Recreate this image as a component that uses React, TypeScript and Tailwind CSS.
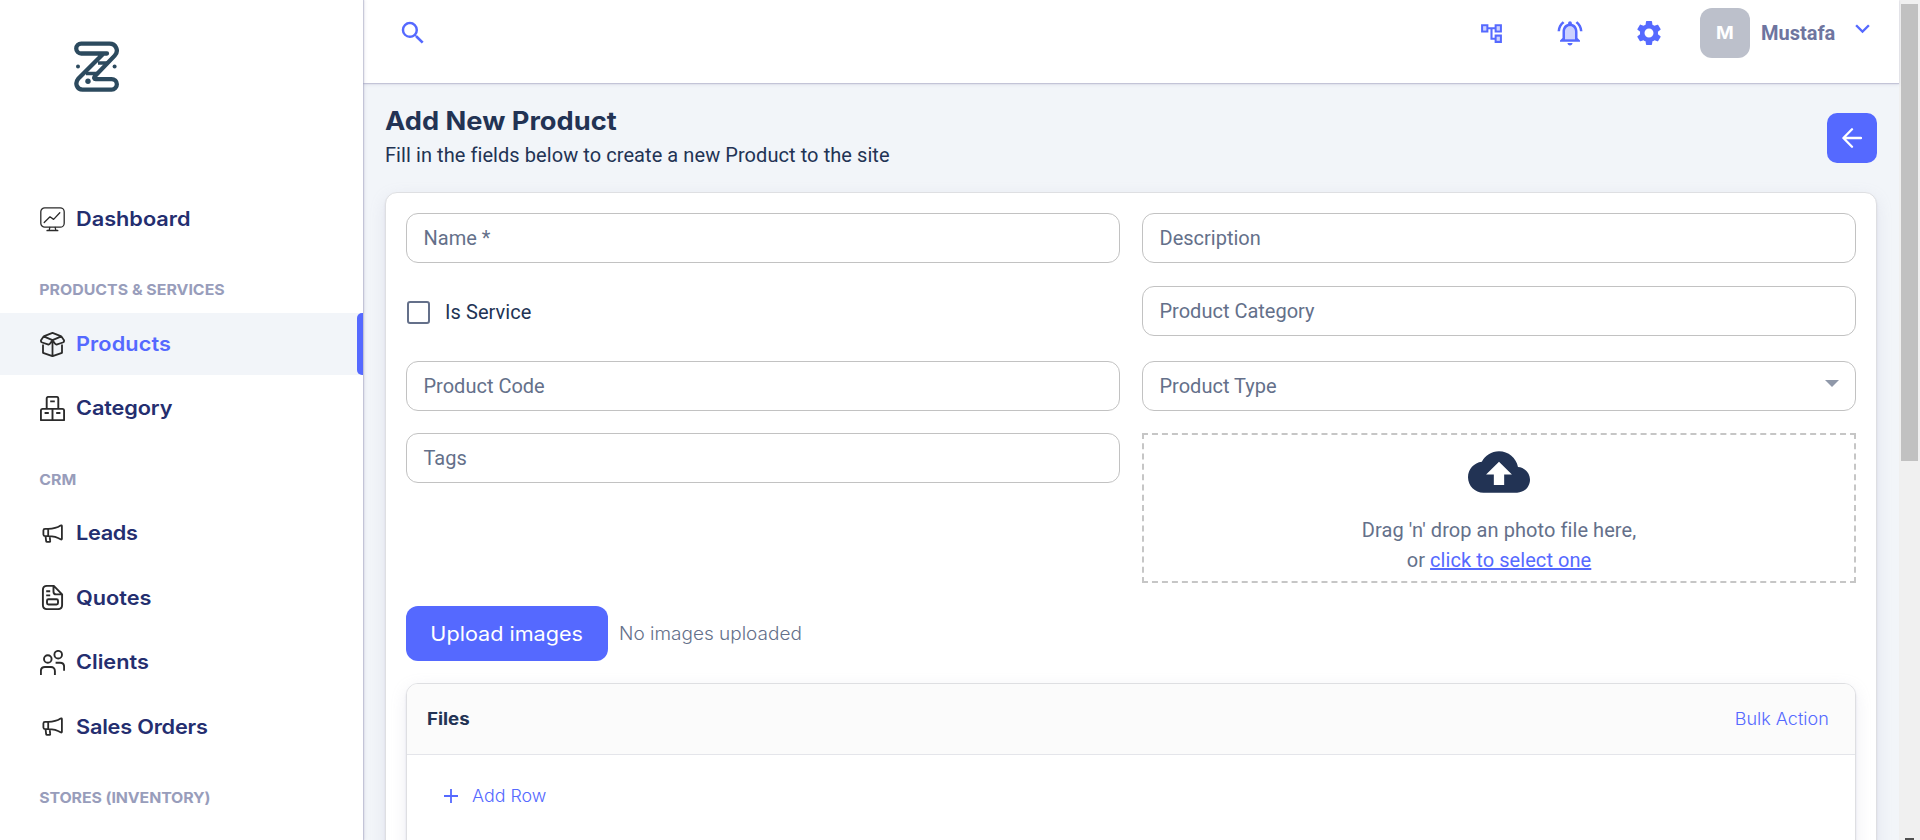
import type { ReactNode } from "react";

const ink = { fill: "none", stroke: "#2b2b2b", strokeWidth: 1.9, strokeLinejoin: "round" as const };

function MenuIcon({ children }: { children: ReactNode }) {
  return (
    <svg viewBox="0 0 25 25" className="size-[25px] shrink-0" {...ink}>
      {children}
    </svg>
  );
}

const DashboardIcon = () => (
  <MenuIcon>
    <g strokeWidth={1.3} strokeLinecap="round">
      <rect x="0.8" y="0.8" width="23.4" height="19.4" rx="4" />
      <path d="M4.2 15.5 10 9.8l3.6 2.6L19.8 5.8M9.8 20.4l-.6 3M15.2 20.4l.6 3" />
      <path d="M7.2 23.5h10.4" strokeWidth={1.7} />
    </g>
  </MenuIcon>
);

const ProductsIcon = () => (
  <MenuIcon>
    <path
      strokeWidth={1.8}
      d="M3 12.5v8.3l9.5 3.4 9.5-3.4v-8.3M12.5 9v15M12.5 8.2 3.6 4.4 1 8.2c-.3 1.2.2 1.9 1.2 2.3l5.6 1.9c.9.3 1.6.1 2.1-.6l2.6-3.6ZM12.5 8.2l8.9-3.8L24 8.2c.3 1.2-.2 1.9-1.2 2.3l-5.6 1.9c-.9.3-1.6.1-2.1-.6l-2.6-3.6ZM3.6 4.4 12.5.9l8.9 3.5"
    />
  </MenuIcon>
);

const CategoryIcon = () => (
  <MenuIcon>
    <path d="M6.7 12.8V2.6c0-1 .6-1.7 1.7-1.7h8.2c1.1 0 1.7.7 1.7 1.7v10.2M.9 24.1v-9.5c0-1.1.6-1.7 1.7-1.7h19.8c1.1 0 1.7.6 1.7 1.7v9.5H.9ZM12.5 12.9v11.2M10.2 5.4h4.6M4.6 17h4.2M16.2 17h4.2" />
  </MenuIcon>
);

const MegaphoneIcon = () => (
  <MenuIcon>
    <path
      strokeWidth={1.8}
      d="M8.2 7.9H5c-1 0-1.6.5-1.6 1.5v4.2c0 1 .6 1.5 1.6 1.5h3.2M8.2 7.9v7.2c4.6 0 9 .9 12.4 3.2.7.4 1.3.2 1.3-.6V5.2c0-.8-.6-1-1.3-.6C17.2 6.9 12.8 7.9 8.2 7.9ZM5.6 15.3l.5 4.7c.1.6.4.9 1 .9h2.3c.6 0 .9-.4.8-1l-.5-4.5"
    />
  </MenuIcon>
);

const QuotesIcon = () => (
  <MenuIcon>
    <path d="M13.2.9H7C4.1.9 2.9 2.4 2.9 5v15c0 2.6 1.3 4.1 4.1 4.1h11c2.8 0 4.1-1.5 4.1-4.1V9.3L13.8.9h-.6ZM13.5 1v5.7c0 1.9.9 2.7 2.7 2.7H22M6.2 6.3h4M6.2 10.4h4" />
    <rect x="7" y="14.3" width="11" height="5.2" rx="1.4" />
  </MenuIcon>
);

const ClientsIcon = () => (
  <MenuIcon>
    <circle cx="7.8" cy="9" r="3.8" />
    <circle cx="18.2" cy="4.7" r="3.8" />
    <path d="M.9 25v-4c0-2.5 1.5-4 4-4h6c2.5 0 4 1.5 4 4v4M15.6 12.8h4.5c2.5 0 4 1.5 4 4v4" />
  </MenuIcon>
);

function Logo() {
  return (
    <svg viewBox="74 41 46 52" className="h-[52px] w-[46px]" fill="none" stroke="#2c4a5e" strokeWidth="4.3" strokeLinecap="round" strokeLinejoin="round">
      <path d="M107 53.5H81.2a4.9 4.9 0 0 1 0-9.9H109.5c6.5 0 9.7 7.2 5.2 12L94.6 76.6c-.8 1.2-.4 2.5 1 2.5h16a5.2 5.2 0 0 1 0 10.5H82.5c-5.6 0-8-6.4-4.3-10.8L103 54" />
      <path d="M98 63h9M86 73.5h11" strokeWidth="3.6" strokeLinecap="butt" />
      <circle cx="78" cy="66.4" r="2" fill="#2c4a5e" stroke="none" />
      <circle cx="114.6" cy="66.4" r="2" fill="#2c4a5e" stroke="none" />
      <circle cx="88" cy="81.3" r="2.7" fill="#2c4a5e" stroke="none" />
    </svg>
  );
}

function MenuItem({ icon, label, tracking = "", active = false }: { icon: ReactNode; label: string; tracking?: string; active?: boolean }) {
  return (
    <a className={`flex h-[62px] items-center pl-10 ${active ? "bg-[#f2f5f9] text-[#5569ff]" : "text-[#242e6f]"}`}>
      {icon}
      <span className={`ml-[11px] origin-left scale-x-[1.085] text-[20px] leading-6 font-semibold whitespace-nowrap ${tracking}`}>{label}</span>
      {active && <span className="ml-auto h-full w-1.5 rounded-l-[5px] bg-[#5569ff]" />}
    </a>
  );
}

function MenuHeading({ label, className }: { label: string; className: string }) {
  return (
    <h3 className={`origin-left scale-x-[1.06] pl-[37px] text-[15px] leading-5 font-bold whitespace-nowrap text-[#989dbb] ${className}`}>{label}</h3>
  );
}

function Sidebar() {
  return (
    <aside className="relative z-20 flex w-[363px] shrink-0 flex-col bg-white shadow-[2px_0_3px_rgba(159,162,191,0.18),1px_0_1px_rgba(159,162,191,0.5)]">
      <div className="flex h-[188px] shrink-0 pt-[41px] pl-[74px]">
        <Logo />
      </div>
      <nav className="flex flex-col">
        <MenuItem icon={<DashboardIcon />} label="Dashboard" />
        <MenuHeading label="PRODUCTS & SERVICES" className="mt-[30px] mb-[13px]" />
        <div className="flex flex-col gap-[2px]">
          <MenuItem icon={<ProductsIcon />} label="Products" tracking="tracking-[0.1px]" active />
          <MenuItem icon={<CategoryIcon />} label="Category" tracking="tracking-[-0.1px]" />
        </div>
        <MenuHeading label="CRM" className="mt-[31px] mb-3" />
        <div className="flex flex-col gap-[2.5px]">
          <MenuItem icon={<MegaphoneIcon />} label="Leads" tracking="tracking-[-0.3px]" />
          <MenuItem icon={<QuotesIcon />} label="Quotes" />
          <MenuItem icon={<ClientsIcon />} label="Clients" />
          <MenuItem icon={<MegaphoneIcon />} label="Sales Orders" tracking="tracking-[-0.2px]" />
        </div>
        <MenuHeading label="STORES (INVENTORY)" className="mt-[30px] tracking-[-0.12px]" />
      </nav>
    </aside>
  );
}

function Header() {
  return (
    <header className="relative z-10 flex h-[83px] shrink-0 items-start bg-white pl-[35px] shadow-[0_2px_3px_rgba(159,162,191,0.18),0_1px_1px_rgba(159,162,191,0.5)]">
      <svg viewBox="0 0 24 24" className="mt-[17.5px] size-[30px]" fill="#5569ff">
        <path d="M15.5 14h-.79l-.28-.27A6.471 6.471 0 0 0 16 9.5 6.5 6.5 0 1 0 9.5 16c1.61 0 3.09-.59 4.23-1.57l.27.28v.79l5 4.99L20.49 19l-4.99-5zm-6 0C7.01 14 5 11.99 5 9.5S7.01 5 9.5 5 14 7.01 14 9.5 11.99 14 9.5 14z" />
      </svg>
      <div className="ml-auto flex h-[66px] items-center">
        <svg viewBox="0 0 24 24" className="size-[25px]" fill="#5569ff">
          <path opacity=".3" d="M7 9H4V5h3v4zm10 6h3v4h-3v-4zm0-10h3v4h-3V5z" />
          <path d="M22 11V3h-7v3H9V3H2v8h7V8h2v10h4v3h7v-8h-7v3h-2V8h2v3h7zM7 9H4V5h3v4zm10 6h3v4h-3v-4zm0-10h3v4h-3V5z" />
        </svg>
        <svg viewBox="0 0 24 24" className="ml-[51px] size-[30px]" fill="#5569ff">
          <path opacity=".3" d="M12 6.5c-2.49 0-4 2.02-4 4.5v6h8v-6c0-2.48-1.51-4.5-4-4.5z" />
          <path d="M12 22c1.1 0 2-.9 2-2h-4c0 1.1.9 2 2 2zm6-11c0-3.07-1.63-5.64-4.5-6.32V4c0-.83-.67-1.5-1.5-1.5s-1.5.67-1.5 1.5v.68C7.64 5.36 6 7.92 6 11v5l-2 2v1h16v-1l-2-2v-5zm-2 6H8v-6c0-2.48 1.51-4.5 4-4.5s4 2.02 4 4.5v6zM7.58 4.08 6.15 2.65C3.75 4.48 2.17 7.3 2.03 10.5h2c.15-2.65 1.51-4.97 3.55-6.42zM19.97 10.5h2c-.15-3.2-1.73-6.02-4.12-7.85l-1.42 1.43c2.02 1.45 3.39 3.77 3.54 6.42z" />
        </svg>
        <svg viewBox="0 0 24 24" className="ml-[49px] size-[30px]" fill="#5569ff">
          <path d="M19.14 12.94c.04-.3.06-.61.06-.94 0-.32-.02-.64-.07-.94l2.03-1.58c.18-.14.23-.41.12-.61l-1.92-3.32c-.12-.22-.37-.29-.59-.22l-2.39.96c-.5-.38-1.03-.7-1.62-.94l-.36-2.54c-.04-.24-.24-.41-.48-.41h-3.84c-.24 0-.43.17-.47.41l-.36 2.54c-.59.24-1.13.57-1.62.94l-2.39-.96c-.22-.08-.47 0-.59.22L2.74 8.87c-.12.21-.08.47.12.61l2.03 1.58c-.05.3-.09.63-.09.94s.02.64.07.94l-2.03 1.58c-.18.14-.23.41-.12.61l1.92 3.32c.12.22.37.29.59.22l2.39-.96c.5.38 1.03.7 1.62.94l.36 2.54c.05.24.24.41.48.41h3.84c.24 0 .44-.17.47-.41l.36-2.54c.59-.24 1.13-.56 1.62-.94l2.39.96c.22.08.47 0 .59-.22l1.92-3.32c.12-.22.07-.47-.12-.61l-2.01-1.58zM12 15.6c-1.98 0-3.6-1.62-3.6-3.6s1.62-3.6 3.6-3.6 3.6 1.62 3.6 3.6-1.62 3.6-3.6 3.6z" />
        </svg>
        <div className="ml-9 flex size-[50px] items-center justify-center rounded-xl bg-[#bcc0cb] pt-px text-[17px] font-bold text-white">
          <span className="scale-x-[1.12]">M</span>
        </div>
        <span className="ml-[11px] w-[76px] font-[Roboto,sans-serif] text-[20px] leading-6 font-bold text-[#6e759f]">Mustafa</span>
        <svg viewBox="0 0 24 24" className="mr-[22px] mb-2.5 ml-[11px] size-[29px]" fill="#5569ff">
          <path d="M16.59 8.59 12 13.17 7.41 8.59 6 10l6 6 6-6z" />
        </svg>
      </div>
    </header>
  );
}

function Field({ label, select = false }: { label: string; select?: boolean }) {
  return (
    <div className="flex h-[50px] items-center rounded-xl border border-[#c2c2c2] pl-[16.5px] font-[Roboto,sans-serif] text-[20px] leading-6 text-[#64708a]">
      {label}
      {select && (
        <svg viewBox="0 0 14 7" className="mr-4 mb-[5px] ml-auto h-[7px] w-[14px]">
          <path d="M0 0h14L7 7z" fill="#8f98a9" />
        </svg>
      )}
    </div>
  );
}

function Dropzone() {
  return (
    <div className="flex h-[150px] flex-col items-center border-2 border-dashed border-[#c6c6c6] pt-[6px] font-[Roboto,sans-serif] text-[20px] leading-[30px] tracking-[0.07px] text-[#64708a]">
      <svg viewBox="0 0 24 24" className="mb-3 size-[62px] shrink-0" fill="#223354">
        <path d="M19.35 10.04C18.67 6.59 15.64 4 12 4 9.11 4 6.6 5.64 5.35 8.04 2.34 8.36 0 10.91 0 14c0 3.31 2.69 6 6 6h13c2.76 0 5-2.24 5-5 0-2.64-2.05-4.78-4.65-4.96zM14 13v4h-4v-4H7l5-5 5 5h-3z" />
      </svg>
      <p>Drag 'n' drop an photo file here,</p>
      <p>
        or <a className="text-[#5569ff] underline">click to select one</a>
      </p>
    </div>
  );
}

function FilesPanel() {
  return (
    <section className="mt-[22px] flex h-[220px] flex-col overflow-hidden rounded-xl border border-[#dedfe2] bg-white shadow-[0_5px_16px_rgba(159,162,191,0.18),0_2px_2px_rgba(159,162,191,0.32)]">
      <div className="flex h-[71px] shrink-0 items-center justify-between border-b border-[#e4e5ea] bg-[#fbfbfb] pt-[2px] pr-[26px] pl-5">
        <h2 className="origin-left scale-x-[1.1] text-[17px] font-bold text-[#223354]">Files</h2>
        <button className="origin-right scale-x-[1.06] text-[17px] font-light text-[#5569ff]">Bulk Action</button>
      </div>
      <button className="flex items-center pt-[27px] pl-[37px] text-[17px] leading-7 font-light text-[#5569ff]">
        <svg viewBox="0 0 14 14" className="mr-[14px] size-[14px]" stroke="#5569ff" strokeWidth="1.8">
          <path d="M7 0v14M0 7h14" />
        </svg>
        <span className="origin-left scale-x-[1.05]">Add Row</span>
      </button>
    </section>
  );
}

function Scrollbar() {
  return (
    <div className="flex w-[21px] shrink-0 flex-col items-center justify-between bg-[#f0f0f0] pt-1">
      <div className="h-[457px] w-[17px] bg-[#c1c1c1]" />
      <div className="h-[2px] w-[9px] bg-[#505050]" />
    </div>
  );
}

export default function App() {
  return (
    <div className="flex h-[840px] w-[1920px] overflow-hidden bg-[#f2f5f9] font-[Inter,sans-serif]">
      <Sidebar />
      <div className="flex min-w-0 flex-1 flex-col">
        <Header />
        <main className="flex flex-1 flex-col px-[22px]">
          <div className="flex h-[109px] shrink-0 justify-between">
            <div className="pt-[23px]">
              <h1 className="w-[212px] origin-left scale-x-[1.09] text-[25px] leading-[30px] font-bold whitespace-nowrap text-[#223354]">Add New Product</h1>
              <p className="mt-1 font-[Roboto,sans-serif] text-[20px] leading-[30px] tracking-[0.07px] text-[#223354]">
                Fill in the fields below to create a new Product to the site
              </p>
            </div>
            <button className="mt-[30px] flex size-[50px] items-center justify-center rounded-[10px] bg-[#5569ff]">
              <svg viewBox="0 0 20 20" className="size-5" fill="none" stroke="#fff" strokeWidth="2.3" strokeLinecap="round" strokeLinejoin="round">
                <path d="M19 10H1.7M10 1.3 1.4 10l8.6 8.7" />
              </svg>
            </button>
          </div>
          <div className="h-[720px] shrink-0 rounded-xl border border-[#dedfe2] bg-white px-5 pt-5 shadow-[0_5px_16px_rgba(159,162,191,0.18),0_2px_2px_rgba(159,162,191,0.32)]">
            <div className="grid grid-cols-2 gap-x-[22px]">
              <Field label="Name *" />
              <Field label="Description" />
              <label className="mt-6 flex h-[50px] items-center pl-px font-[Roboto,sans-serif] text-[20px] leading-6 tracking-[0.07px] text-[#223354]">
                <span className="mr-[15px] size-[23px] rounded-[3px] border-[2.5px] border-[#64708a]" />
                Is Service
              </label>
              <div className="mt-[23px]">
                <Field label="Product Category" />
              </div>
              <div className="mt-6">
                <Field label="Product Code" />
              </div>
              <div className="mt-6">
                <Field label="Product Type" select />
              </div>
              <div className="mt-[22px]">
                <Field label="Tags" />
              </div>
              <div className="mt-[22px]">
                <Dropzone />
              </div>
            </div>
            <div className="mt-[23px] flex items-center">
              <button className="h-[55px] w-[202px] rounded-xl bg-[#5569ff] text-[20px] text-white">
                <span className="inline-block scale-x-[1.08]">Upload images</span>
              </button>
              <span className="ml-[11px] origin-left scale-x-[1.055] text-[18px] font-light text-[#64708a]">No images uploaded</span>
            </div>
            <FilesPanel />
          </div>
        </main>
      </div>
      <Scrollbar />
    </div>
  );
}
